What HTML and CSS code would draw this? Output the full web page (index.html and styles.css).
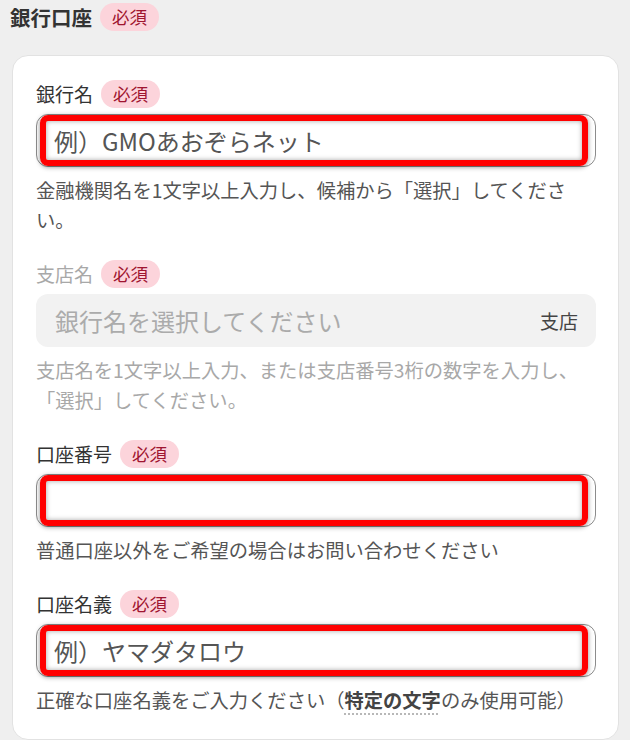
FILE: index.html
```html
<!DOCTYPE html>
<html lang="ja">
<head>
<meta charset="utf-8">
<title>銀行口座</title>
<link rel="stylesheet" href="styles.css">
</head>
<body>
<div class="page">
  <div class="section-head">
    <h2 class="section-title">銀行口座</h2>
    <span class="badge">必須</span>
  </div>
  <div class="card">
    <div class="field">
      <div class="label-row"><span class="label">銀行名</span><span class="badge">必須</span></div>
      <div class="input">
        <span class="placeholder">例）GMOあおぞらネット</span>
        <span class="mark"></span>
      </div>
      <p class="help">金融機関名を1文字以上入力し、候補から「選択」してください。</p>
    </div>
    <div class="field is-disabled">
      <div class="label-row"><span class="label">支店名</span><span class="badge">必須</span></div>
      <div class="input input-disabled">
        <span class="placeholder">銀行名を選択してください</span>
        <span class="suffix">支店</span>
      </div>
      <p class="help">支店名を1文字以上入力、または支店番号3桁の数字を入力し、「選択」してください。</p>
    </div>
    <div class="field">
      <div class="label-row"><span class="label">口座番号</span><span class="badge">必須</span></div>
      <div class="input">
        <span class="placeholder"></span>
        <span class="mark"></span>
      </div>
      <p class="help">普通口座以外をご希望の場合はお問い合わせください</p>
    </div>
    <div class="field">
      <div class="label-row"><span class="label">口座名義</span><span class="badge">必須</span></div>
      <div class="input">
        <span class="placeholder">例）ヤマダタロウ</span>
        <span class="mark"></span>
      </div>
      <p class="help">正確な口座名義をご入力ください（<span class="term">特定の文字</span>のみ使用可能）</p>
    </div>
  </div>
</div>
</body>
</html>
```

FILE: styles.css
```css
html, body {
  margin: 0;
  padding: 0;
  background: #efefef;
}
body {
  font-family: "Noto Sans CJK JP", "Noto Sans", sans-serif;
  color: #333;
}
.page {
  padding: 3px 11px 0 10px;
}
.section-head {
  display: flex;
  align-items: center;
  gap: 8px;
  height: 28px;
}
.section-title {
  margin: 0;
  font-size: 20.5px;
  font-weight: 700;
  color: #333;
  line-height: 28px;
}
.badge {
  display: inline-flex;
  align-items: center;
  height: 28px;
  padding: 0 12px;
  border-radius: 14px;
  background: #fcd4db;
  color: #9f1530;
  font-size: 17.5px;
  line-height: 1;
}
.card {
  margin: 24px 0 0 2px;
  background: #fff;
  border: 1px solid #e2e2e2;
  border-radius: 16px;
  padding: 24px 22px 24px 23px;
}
.field + .field {
  margin-top: 25px;
}
.label-row {
  display: flex;
  align-items: center;
  gap: 8px;
  height: 28px;
}
.label {
  font-size: 19px;
  color: #333;
  line-height: 28px;
}
.input {
  position: relative;
  margin-top: 6px;
  height: 53px;
  box-sizing: border-box;
  border: 1px solid #8c8c8c;
  border-radius: 12px;
  background: #fff;
  display: flex;
  align-items: center;
  padding: 0 18px 0 17px;
  font-size: 24px;
}
.placeholder {
  flex: 1;
  color: #555;
  white-space: nowrap;
}
.mark {
  position: absolute;
  left: 3px;
  top: 0;
  right: 7px;
  bottom: 0;
  border: 6px solid #ff0000;
  border-radius: 8px;
  box-shadow: 0 1px 5px rgba(0, 0, 0, 0.45), inset 0 0 5px rgba(0, 0, 0, 0.35);
}
.help {
  margin: 8px 0 0;
  font-size: 19.3px;
  line-height: 30px;
  color: #555;
}
.is-disabled .label {
  color: #a8a8a8;
}
.is-disabled .help {
  color: #a8a8a8;
}
.input-disabled {
  border: none;
  background: #f2f2f2;
}
.input-disabled .placeholder {
  color: #ababab;
  padding-left: 2px;
}
.suffix {
  font-size: 19px;
  color: #444;
}
.term {
  font-weight: 700;
  color: #444;
  text-decoration: underline dotted #b8b8b8;
  text-decoration-thickness: 2px;
  text-underline-offset: 5px;
}
```
